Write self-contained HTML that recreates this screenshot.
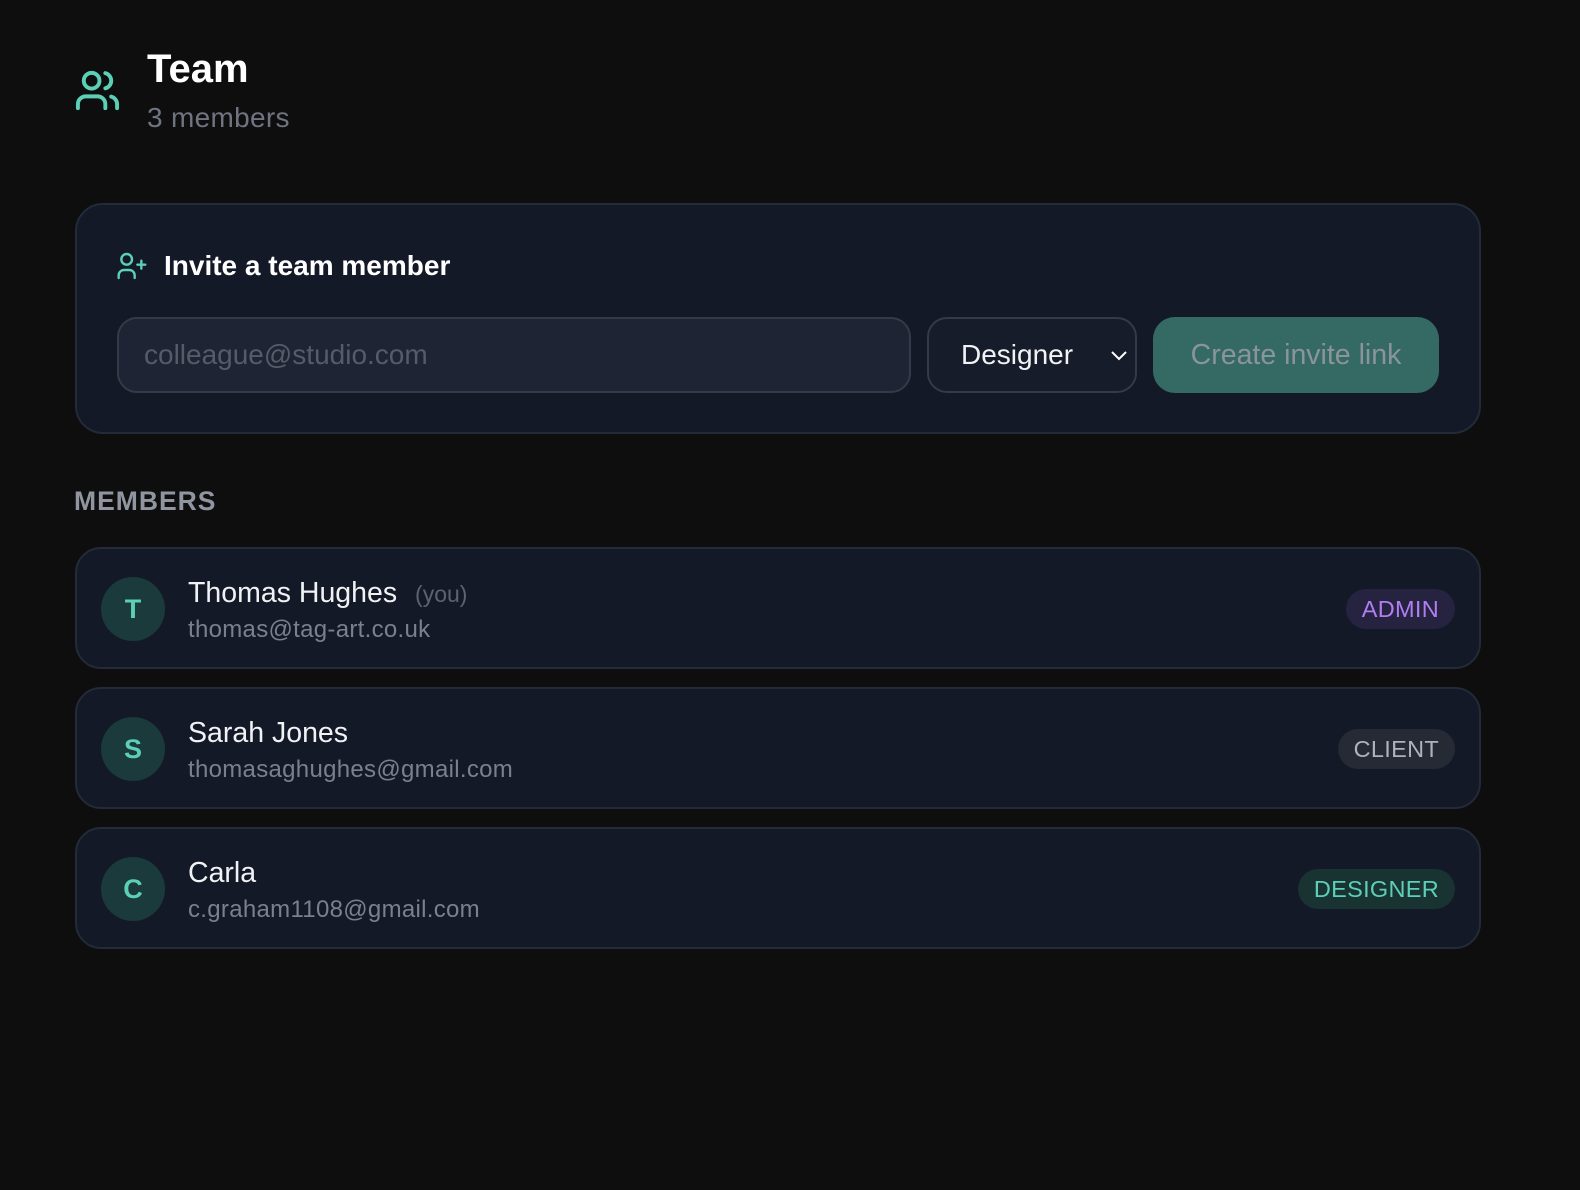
<!DOCTYPE html>
<html><head><style>
body{margin:0;background:#0e0e0f;width:1580px;height:1190px;font-family:"Liberation Sans",sans-serif;color:#fff;overflow:hidden;position:relative}
.a{position:absolute}
.card{position:absolute;left:75px;width:1406px;background:#131927;border:2px solid #232a38;box-sizing:border-box;border-radius:28px}
.row{height:122px;border-radius:26px}
.av{position:absolute;left:24px;top:28px;width:64px;height:64px;border-radius:50%;background:#1b3a3c;color:#5ccfb7;font-weight:bold;font-size:27px;text-align:center;line-height:64px}
.nm{position:absolute;left:111px;top:28px;font-size:28.5px;color:#f1f2f4}
.em{position:absolute;left:111px;top:67px;font-size:24px;color:#7b808c;letter-spacing:0.3px}
.bd{position:absolute;right:24px;top:40px;height:40px;line-height:40px;border-radius:20px;padding:0 16px;font-size:23.5px;letter-spacing:0.3px}
</style></head><body>
<svg class="a" style="left:74px;top:67px" width="47" height="47" viewBox="0 0 24 24" fill="none" stroke="#5ccfb7" stroke-width="2" stroke-linecap="round"><path d="M16 21v-2a4 4 0 0 0-4-4H6a4 4 0 0 0-4 4v2"/><circle cx="9" cy="7" r="4"/><path d="M22 21v-2a4 4 0 0 0-3-3.87"/><path d="M16 3.13a4 4 0 0 1 0 7.75"/></svg>
<div class="a" style="left:147px;top:47px;font-size:40px;font-weight:bold">Team</div>
<div class="a" style="left:147px;top:102px;font-size:28px;color:#6f7480;letter-spacing:0.3px">3 members</div>
<div class="card" style="top:203px;height:231px">
 <svg class="a" style="left:39px;top:45px" width="32" height="32" viewBox="0 0 24 24" fill="none" stroke="#5ccfb7" stroke-width="1.8" stroke-linecap="round"><path d="M14 21v-2a4 4 0 0 0-4-4H6a4 4 0 0 0-4 4v2"/><circle cx="8" cy="7" r="4"/><path d="M19 8v6M22 11h-6"/></svg>
 <div class="a" style="left:87px;top:45px;font-size:28px;font-weight:bold">Invite a team member</div>
 <div class="a" style="left:40px;top:112px;width:794px;height:76px;box-sizing:border-box;border:2px solid #333a48;border-radius:20px;background:#1e2433;color:#555b68;font-size:28px;line-height:72px;padding-left:25px">colleague@studio.com</div>
 <div class="a" style="left:850px;top:112px;width:210px;height:76px;box-sizing:border-box;border:2px solid #333a48;border-radius:20px;background:#161c29;color:#f1f2f4;font-size:28px;line-height:72px;padding-left:32px">Designer
  <svg class="a" style="left:181px;top:29px" width="18" height="14" viewBox="0 0 18 14" fill="none" stroke="#fff" stroke-width="2"><path d="M2 4l7 7 7-7"/></svg></div>
 <div class="a" style="left:1076px;top:112px;width:286px;height:76px;border-radius:22px;background:#346964;color:#8a949a;font-size:28.5px;line-height:76px;text-align:center">Create invite link</div>
</div>
<div class="a" style="left:74px;top:486px;font-size:26.5px;font-weight:bold;color:#9096a0;letter-spacing:1px">MEMBERS</div>
<div class="card row" style="top:547px"><div class="av">T</div><div class="nm">Thomas Hughes <span style="font-size:23px;color:#5d626d;margin-left:10px">(you)</span></div><div class="em">thomas@tag-art.co.uk</div><div class="bd" style="background:#252340;color:#b07ef0">ADMIN</div></div>
<div class="card row" style="top:687px"><div class="av">S</div><div class="nm">Sarah Jones</div><div class="em">thomasaghughes@gmail.com</div><div class="bd" style="background:#252a35;color:#aeb2ba">CLIENT</div></div>
<div class="card row" style="top:827px"><div class="av">C</div><div class="nm">Carla</div><div class="em">c.graham1108@gmail.com</div><div class="bd" style="background:#193333;color:#5ccfb7">DESIGNER</div></div>
</body></html>
